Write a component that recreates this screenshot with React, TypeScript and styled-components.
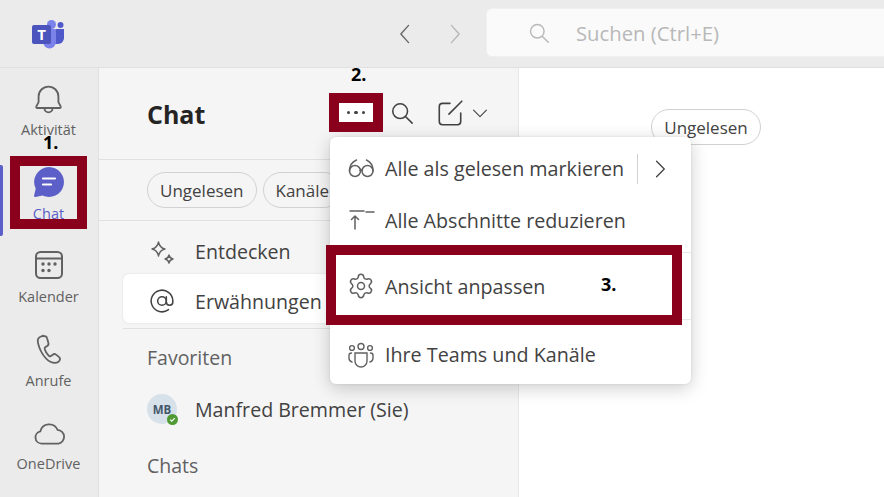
import React from "react";
import styled, { createGlobalStyle } from "styled-components";
import { AtSign, Settings } from "lucide-react";

const GlobalStyle = createGlobalStyle`
  html, body {
    margin: 0;
    padding: 0;
    background: #ffffff;
    overflow: hidden;
  }
  * {
    box-sizing: border-box;
  }
`;

const Page = styled.div`
  position: relative;
  width: 884px;
  height: 497px;
  overflow: hidden;
  font-family: "Open Sans", "Noto Sans", sans-serif;
  color: #424242;
  display: flex;
  flex-direction: column;
`;

const TopBar = styled.header`
  height: 68px;
  flex: none;
  display: flex;
  align-items: center;
  background: #ebebeb;
  border-bottom: 1px solid #e0e0e0;
  padding-left: 31px;
`;

const Logo = styled.svg`
  width: 34px;
  height: 30px;
  flex: none;
`;

const NavButton = styled.div`
  width: 24px;
  height: 24px;
  display: flex;
  align-items: center;
  justify-content: center;
`;

const NavGroup = styled.div`
  display: flex;
  gap: 24px;
  margin-left: 329px;
`;

const SearchBox = styled.div`
  margin-left: 20px;
  margin-top: -3px;
  flex: 1;
  height: 49px;
  margin-right: -10px;
  background: #fafafa;
  border: 1px solid #f0f0f0;
  border-radius: 6px;
  display: flex;
  align-items: center;
  padding: 1px 0 0 41px;
  gap: 26px;
  color: #b8b8b8;
  font-size: 20.3px;
`;

const Body = styled.div`
  flex: 1;
  display: flex;
  min-height: 0;
`;

const Rail = styled.nav`
  width: 99px;
  flex: none;
  background: #ebebeb;
  border-right: 1px solid #e0e0e0;
  padding: 11px 1px 0 0;
  display: flex;
  flex-direction: column;
`;

const RailItem = styled.div<{ $active?: boolean }>`
  position: relative;
  height: 84px;
  display: flex;
  flex-direction: column;
  align-items: center;
  color: ${(p) => (p.$active ? "#5b5fc7" : "#616161")};
  font-size: 14.5px;
  line-height: 19px;
`;

const RailIcon = styled.div`
  height: 38px;
  width: 38px;
  display: flex;
  align-items: center;
  justify-content: center;
  margin-bottom: 3px;
`;

const ActiveBar = styled.span`
  position: absolute;
  left: 0;
  top: 2px;
  width: 3px;
  height: 71px;
  background: #5b5fc7;
  border-radius: 0 2px 2px 0;
`;

const ListPane = styled.section`
  width: 420px;
  flex: none;
  background: #f5f5f5;
  border-right: 1px solid #e8e8e8;
  display: flex;
  flex-direction: column;
`;

const ListHeader = styled.div`
  height: 92px;
  flex: none;
  border-bottom: 1px solid #e0e0e0;
  display: flex;
  padding: 28px 27px 0 48px;
`;

const Title = styled.h1`
  margin: 0;
  font-size: 25px;
  line-height: 36px;
  font-weight: 700;
  color: #242424;
  flex: 1;
`;

const HeaderActions = styled.div`
  display: flex;
  align-items: flex-start;
  padding-top: 2px;
  color: #424242;
`;

const ActionSlot = styled.div<{ $w: number }>`
  width: ${(p) => p.$w}px;
  height: 30px;
  display: flex;
  align-items: center;
  justify-content: center;
`;

const FilterRow = styled.div`
  height: 61px;
  flex: none;
  border-bottom: 1px solid #e0e0e0;
  display: flex;
  gap: 6px;
  align-items: center;
  padding-left: 48px;
  overflow: hidden;
`;

const Pill = styled.div`
  height: 36px;
  flex: none;
  padding: 0 12px;
  border: 1px solid #d1d1d1;
  border-radius: 18px;
  display: flex;
  align-items: center;
  font-size: 17px;
  color: #424242;
`;

const NavList = styled.div`
  padding: 6px 0 0 24px;
`;

const NavRow = styled.div<{ $selected?: boolean }>`
  height: 49px;
  display: flex;
  align-items: center;
  gap: 19px;
  padding-left: 25px;
  border-radius: 6px 0 0 6px;
  font-size: 19.6px;
  color: #424242;
  ${(p) =>
    p.$selected
      ? `
    margin-top: -2px;
    padding-top: 5px;
    background: #ffffff;
    box-shadow: 0 0 2px rgba(0, 0, 0, 0.14);
  `
      : ""}
`;

const NavIcon = styled.div`
  width: 28px;
  height: 28px;
  display: flex;
  align-items: center;
  justify-content: center;
  flex: none;
`;

const Divider = styled.div`
  height: 1px;
  background: #e0e0e0;
  margin-top: 5px;
`;

const SectionLabel = styled.div<{ $top?: number }>`
  font-size: 19.5px;
  line-height: 28px;
  color: #616161;
  padding-left: 48px;
  margin-top: ${(p) => p.$top ?? 0}px;
`;

const FavRow = styled.div`
  display: flex;
  align-items: center;
  gap: 18px;
  padding-left: 48px;
  margin: 22px 0 28px;
  font-size: 19.6px;
  color: #424242;
`;

const Avatar = styled.div`
  position: relative;
  width: 30px;
  height: 30px;
  border-radius: 50%;
  background: #d6e1ea;
  display: flex;
  align-items: center;
  justify-content: center;
  font-size: 11.5px;
  font-weight: 700;
  color: #44586b;
`;

const StatusDot = styled.span`
  position: absolute;
  right: -1px;
  bottom: -1px;
  width: 11px;
  height: 11px;
  border-radius: 50%;
  background: #4f9a32;
  display: flex;
  align-items: center;
  justify-content: center;
`;

const Main = styled.main`
  flex: 1;
  background: #ffffff;
  padding: 41px 0 0 132px;
`;

const MainPill = styled(Pill)`
  width: 110px;
  justify-content: center;
  padding: 0;
`;

const Menu = styled.div`
  position: absolute;
  left: 330px;
  top: 137px;
  width: 361px;
  height: 247px;
  background: #ffffff;
  border-radius: 6px;
  box-shadow: 0 4px 18px rgba(0, 0, 0, 0.2), 0 0 3px rgba(0, 0, 0, 0.08);
  padding-top: 6px;
  overflow: hidden;
`;

const MenuRow = styled.div<{ $h: number; $line?: boolean }>`
  height: ${(p) => p.$h}px;
  display: flex;
  align-items: center;
  padding-left: 17px;
  font-size: 19.7px;
  color: #424242;
  ${(p) => (p.$line ? "border-top: 1px solid #e8e8e8;" : "")}
`;

const MenuSection = styled.div`
  margin-top: 6px;
`;

const MenuIcon = styled.div`
  width: 28px;
  height: 28px;
  margin-right: 10px;
  display: flex;
  align-items: center;
  justify-content: center;
  flex: none;
`;

const MenuSub = styled.div`
  margin-left: 13px;
  height: 30px;
  width: 44px;
  border-left: 1px solid #d1d1d1;
  display: flex;
  align-items: center;
  justify-content: center;
`;

const Mark = styled.div<{ $x: number; $y: number; $w: number; $h: number }>`
  position: absolute;
  left: ${(p) => p.$x}px;
  top: ${(p) => p.$y}px;
  width: ${(p) => p.$w}px;
  height: ${(p) => p.$h}px;
  border: 10px solid #8a001c;
  pointer-events: none;
`;

const Step = styled.div<{ $x: number; $y: number }>`
  position: absolute;
  left: ${(p) => p.$x}px;
  top: ${(p) => p.$y}px;
  font-size: 18px;
  line-height: 20px;
  font-weight: 700;
  color: #000000;
`;

const MoreDots = styled.div`
  position: absolute;
  left: 339px;
  top: 103px;
  width: 34px;
  height: 19px;
  background: #ffffff;
  display: flex;
  align-items: center;
  justify-content: center;
  gap: 4px;
`;

const Dot = styled.span`
  width: 3.5px;
  height: 3.5px;
  border-radius: 50%;
  background: #424242;
`;

type IconProps = { size?: number; color?: string };

const Line = ({ size = 28, color = "#616161", d, w = 1.5 }: IconProps & { d: string; w?: number }) => (
  <svg width={size} height={size} viewBox="0 0 28 28" fill="none" stroke={color} strokeWidth={w} strokeLinecap="round" strokeLinejoin="round">
    <path d={d} />
  </svg>
);

const TeamsLogo = () => (
  <Logo viewBox="0 0 34 30">
    <circle cx="29.5" cy="6" r="3" fill="#5059c9" />
    <path d="M22 10h11v9a6 6 0 0 1-6 6h-5z" fill="#5059c9" />
    <circle cx="20.5" cy="5.5" r="4.5" fill="#7b83eb" />
    <path d="M12 10h13v13a6.5 6.5 0 0 1-13 0z" fill="#7b83eb" />
    <rect x="1" y="6" width="19" height="19" rx="2" fill="#4b53bc" />
    <text x="10.5" y="21" textAnchor="middle" fontSize="15" fontWeight="700" fill="#ffffff" fontFamily="Open Sans, sans-serif">T</text>
  </Logo>
);

const BellIcon = () => (
  <Line size={37} w={1.4} d="M14 5a7.5 7.5 0 0 0-7.5 7.5v4.2L4.8 20a.8.8 0 0 0 .7 1.2h17a.8.8 0 0 0 .7-1.2l-1.7-3.3v-4.2A7.5 7.5 0 0 0 14 5zM11 21.5a3 3 0 0 0 6 0" />
);

const ChatIcon = () => (
  <svg width="34" height="34" viewBox="0 0 34 34">
    <path d="M17 2a15 15 0 1 1-6.6 28.5L3.6 32c-.9.2-1.7-.6-1.5-1.5l1.6-6.8A15 15 0 0 1 17 2z" fill="#5b5fc7" />
    <path d="M11 13.5h12M11 19.5h8" stroke="#ffffff" strokeWidth="2.2" strokeLinecap="round" />
  </svg>
);

const CalendarIcon = () => (
  <svg width="30" height="30" viewBox="0 0 30 30" fill="none" stroke="#616161" strokeWidth="2">
    <rect x="2" y="2" width="26" height="26" rx="4.5" />
    <path d="M2.5 8.5h25" />
    <g fill="#616161" stroke="none">
      <circle cx="9" cy="14" r="1.7" />
      <circle cx="15" cy="14" r="1.7" />
      <circle cx="21" cy="14" r="1.7" />
      <circle cx="9" cy="20.5" r="1.7" />
      <circle cx="15" cy="20.5" r="1.7" />
    </g>
  </svg>
);

const PhoneIcon = () => (
  <Line size={36} w={1.4} d="M9.6 3.6 7.4 4.5C5.6 5.3 5 7 5.4 9c1 5 3.4 9.2 6.3 12.4 2 2.2 4.6 3.4 7.1 3.4 1.7 0 2.8-.7 3.5-2 .5-1 .2-2-.6-2.7l-2.2-1.7c-.8-.6-1.8-.6-2.6 0l-1.4 1c-.6.4-1.3.3-1.8-.2-1.4-1.4-2.4-3.1-3-5-.2-.7 0-1.3.6-1.7l1.3-.9c.9-.6 1.2-1.6.9-2.5l-1-3.5c-.3-1.3-1.6-2-2.9-1.5z" />
);

const CloudIcon = () => (
  <Line size={38} w={1.3} d="M8.5 22.5a4.5 4.5 0 0 1-.9-8.9 6.7 6.7 0 0 1 12.7-1.2 5.1 5.1 0 0 1 .7 10.1z" />
);

const SparkleIcon = () => (
  <svg width="28" height="28" viewBox="0 0 28 28" fill="none" stroke="#616161" strokeWidth="1.4" strokeLinejoin="round">
    <path d="M10.5 4c.8 4 2.5 6.2 6.5 7-4 .8-5.7 3-6.5 7-.8-4-2.5-6.2-6.5-7 4-.8 5.7-3 6.5-7z" />
    <path d="M21 17c.4 2.2 1.3 3.4 4 4-2.7.6-3.6 1.8-4 4-.4-2.2-1.3-3.4-4-4 2.700-.6 3.600-1.800 4-4z" />
  </svg>
);

const GlassesIcon = () => (
  <svg width="28" height="28" viewBox="0 0 28 28" fill="none" stroke="#616161" strokeWidth="1.5" strokeLinecap="round">
    <circle cx="8" cy="16" r="5.5" />
    <circle cx="20.5" cy="16" r="5.5" />
    <path d="M13 15.5c.8-.6 1.700-.6 2.500 0M2.500 16C2.500 11 5 7 9.500 5M26 16c0-5-2-9-6.500-11" />
  </svg>
);

const CollapseIcon = () => (
  <svg width="28" height="28" viewBox="0 0 28 28" fill="none" stroke="#616161" strokeWidth="1.5" strokeLinecap="round" strokeLinejoin="round">
    <path d="M3 5h14M19 6h8M8 23V10M4.5 13.5 8 10l3.5 3.5" />
  </svg>
);

const TeamIcon = () => (
  <svg width="28" height="28" viewBox="0 0 28 28" fill="none" stroke="#616161" strokeWidth="1.4" strokeLinecap="round">
    <circle cx="14" cy="5.5" r="3" />
    <circle cx="5" cy="7" r="2.4" />
    <circle cx="23" cy="7" r="2.4" />
    <path d="M8 12h12v8a6 6 0 0 1-12 0zM4.5 12C3 12 2 13 2 14.5V17c0 2 1 3.5 3 4M23.5 12c1.5 0 2.5 1 2.5 2.5V17c0 2-1 3.500-3 4" />
  </svg>
);

const SearchGlyph = ({ size = 24, color = "#424242" }: IconProps) => (
  <svg width={size} height={size} viewBox="0 0 26 26" fill="none" stroke={color} strokeWidth="1.7" strokeLinecap="round">
    <circle cx="11" cy="11" r="8" />
    <path d="m17 17 7 7" />
  </svg>
);

const railItems = [
  { label: "Aktivität", icon: <BellIcon /> },
  { label: "Chat", icon: <ChatIcon />, active: true },
  { label: "Kalender", icon: <CalendarIcon /> },
  { label: "Anrufe", icon: <PhoneIcon /> },
  { label: "OneDrive", icon: <CloudIcon /> },
];

export default function App() {
  return (
    <Page>
      <GlobalStyle />
      <TopBar>
        <TeamsLogo />
        <NavGroup>
          <NavButton>
            <Line size={24} color="#616161" d="M17 4 8 14l9 10" />
          </NavButton>
          <NavButton>
            <Line size={24} color="#b4b4b4" d="m11 4 9 10-9 10" />
          </NavButton>
        </NavGroup>
        <SearchBox>
          <SearchGlyph size={22} color="#b8b8b8" />
          Suchen (Ctrl+E)
        </SearchBox>
      </TopBar>

      <Body>
        <Rail>
          {railItems.map((item) => (
            <RailItem key={item.label} $active={item.active}>
              {item.active && <ActiveBar />}
              <RailIcon>{item.icon}</RailIcon>
              {item.label}
            </RailItem>
          ))}
        </Rail>

        <ListPane>
          <ListHeader>
            <Title>Chat</Title>
            <HeaderActions>
              <ActionSlot $w={56}>
                <SearchGlyph />
              </ActionSlot>
              <ActionSlot $w={39}>
                <Line size={30} color="#424242" d="M14 5H7a3 3 0 0 0-3 3v14a3 3 0 0 0 3 3h14a3 3 0 0 0 3-3v-8M25 3 13 15" />
              </ActionSlot>
              <ActionSlot $w={22}>
                <Line size={20} color="#424242" d="m5 10 9 9 9-9" />
              </ActionSlot>
            </HeaderActions>
          </ListHeader>

          <FilterRow>
            <Pill>Ungelesen</Pill>
            <Pill>Kanäle</Pill>
          </FilterRow>

          <NavList>
            <NavRow>
              <NavIcon>
                <SparkleIcon />
              </NavIcon>
              Entdecken
            </NavRow>
            <NavRow $selected>
              <NavIcon>
                <AtSign size={26} strokeWidth={1.4} color="#424242" />
              </NavIcon>
              Erwähnungen
            </NavRow>
            <Divider />
          </NavList>

          <SectionLabel $top={15}>Favoriten</SectionLabel>
          <FavRow>
            <Avatar>
              MB
              <StatusDot>
                <svg width="7" height="7" viewBox="0 0 7 7" fill="none" stroke="#ffffff" strokeWidth="1.2">
                  <path d="m1.2 3.6 1.6 1.6 3-3" />
                </svg>
              </StatusDot>
            </Avatar>
            Manfred Bremmer (Sie)
          </FavRow>
          <SectionLabel>Chats</SectionLabel>
        </ListPane>

        <Main>
          <MainPill>Ungelesen</MainPill>
        </Main>
      </Body>

      <Menu>
        <MenuRow $h={51}>
          <MenuIcon>
            <GlassesIcon />
          </MenuIcon>
          Alle als gelesen markieren
          <MenuSub>
            <Line size={24} color="#424242" d="m10 5 9 9-9 9" />
          </MenuSub>
        </MenuRow>
        <MenuRow $h={52}>
          <MenuIcon>
            <CollapseIcon />
          </MenuIcon>
          Alle Abschnitte reduzieren
        </MenuRow>
        <MenuSection>
          <MenuRow $h={67} $line>
            <MenuIcon>
              <Settings size={28} strokeWidth={1.3} color="#616161" />
            </MenuIcon>
            Ansicht anpassen
          </MenuRow>
          <MenuRow $h={70} $line>
            <MenuIcon>
              <TeamIcon />
            </MenuIcon>
            Ihre Teams und Kanäle
          </MenuRow>
        </MenuSection>
      </Menu>

      <MoreDots>
        <Dot />
        <Dot />
        <Dot />
      </MoreDots>

      <Mark $x={10} $y={156} $w={77} $h={73} />
      <Mark $x={329} $y={93} $w={54} $h={39} />
      <Mark $x={326} $y={245} $w={356} $h={80} />
      <Step $x={43} $y={132}>1.</Step>
      <Step $x={351} $y={64}>2.</Step>
      <Step $x={601} $y={274}>3.</Step>
    </Page>
  );
}
